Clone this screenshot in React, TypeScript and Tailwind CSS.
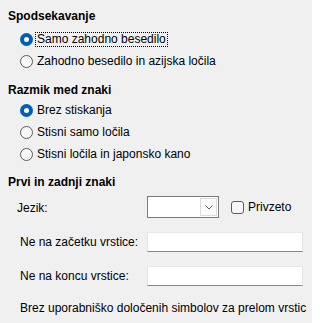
import React from 'react';

function Radio({ label, checked, focused }: { label: string; checked?: boolean; focused?: boolean }) {
  return (
    <div className="flex h-[22px] items-center pl-[20px]">
      {checked ? (
        <span className="flex h-[13px] w-[13px] shrink-0 items-center justify-center rounded-full bg-[#005fb8]">
          <span className="h-[5px] w-[5px] rounded-full bg-white" />
        </span>
      ) : (
        <span className="h-[13px] w-[13px] shrink-0 rounded-full border border-[#5c5c5c] bg-[#f7f7f7]" />
      )}
      <span
        className={
          focused
            ? 'ml-[3px] px-[1px] leading-[13px] outline outline-1 outline-dotted outline-black'
            : 'ml-[4px]'
        }
      >
        {label}
      </span>
    </div>
  );
}

function Heading({ children, className }: { children: React.ReactNode; className: string }) {
  return <div className={`h-[16px] pl-[8px] font-bold leading-[16px] ${className}`}>{children}</div>;
}

function Entry({ label, className }: { label: string; className: string }) {
  return (
    <div className={`flex h-[20px] items-center pl-[20px] ${className}`}>
      <span className="w-[127px] shrink-0">{label}</span>
      <div className="h-[20px] w-[156px] border border-b-[#868686] border-x-[#e3e3e3] border-t-[#e8e8e8] bg-white" />
    </div>
  );
}

export default function App() {
  return (
    <div
      className="h-[323px] w-[312px] overflow-hidden bg-[#f0f0f0] text-[12px] text-black"
      style={{ fontFamily: '"Liberation Sans", Arial, sans-serif' }}
    >
      <Heading className="mt-[8px]">Spodsekavanje</Heading>
      <div className="mt-[4px]">
        <Radio label="Samo zahodno besedilo" checked focused />
        <Radio label="Zahodno besedilo in azijska ločila" />
      </div>

      <Heading className="mt-[10px]">Razmik med znaki</Heading>
      <div className="mt-[1px]">
        <Radio label="Brez stiskanja" checked />
        <Radio label="Stisni samo ločila" />
        <Radio label="Stisni ločila in japonsko kano" />
      </div>

      <Heading className="mt-[9px]">Prvi in zadnji znaki</Heading>
      <div className="mt-[6px] flex h-[22px] items-center pl-[17px]">
        <span className="w-[130px] shrink-0 pt-[2px]">Jezik:</span>
        <div className="flex h-[22px] w-[72px] border border-[#7a7a7a] bg-white">
          <div className="flex-1" />
          <div className="my-[1px] mr-[1px] flex w-[17px] items-center justify-center border border-[#dcdcdc] bg-[#fbfbfb]">
            <svg width="8" height="5" viewBox="0 0 8 5" fill="none">
              <path d="M0.5 0.5 L4 4 L7.5 0.5" stroke="#606060" strokeWidth="1" />
            </svg>
          </div>
        </div>
        <span className="ml-[12px] h-[13px] w-[13px] shrink-0 rounded-[3px] border border-[#5c5c5c] bg-[#f7f7f7]" />
        <span className="ml-[4px]">Privzeto</span>
      </div>

      <Entry label="Ne na začetku vrstice:" className="mt-[14px]" />
      <Entry label="Ne na koncu vrstice:" className="mt-[14px]" />

      <div className="mt-[14px] h-[16px] pl-[20px] leading-[16px]">
        Brez uporabniško določenih simbolov za prelom vrstic
      </div>
    </div>
  );
}
